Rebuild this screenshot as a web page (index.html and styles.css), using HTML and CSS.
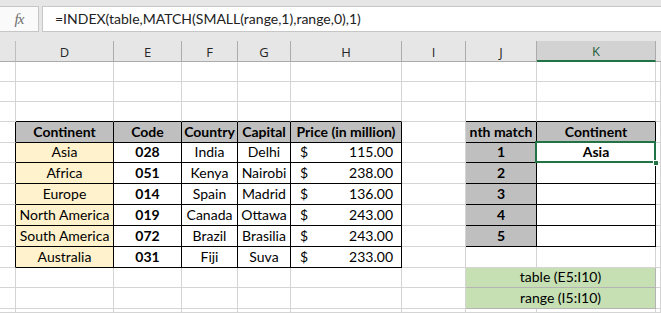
FILE: index.html
```html
<!DOCTYPE html>
<html>
<head>
<meta charset="utf-8">
<link rel="stylesheet" href="styles.css">
</head>
<body>
<div class="topbar">
  <div class="fxbox"><span class="fx">fx</span></div>
  <div class="formula">=INDEX(table,MATCH(SMALL(range,1),range,0),1)</div>
</div>
<div class="sheet">
  <!-- column headers -->
  <div class="ch corner"></div>
  <div class="ch">D</div><div class="ch">E</div><div class="ch">F</div><div class="ch">G</div>
  <div class="ch">H</div><div class="ch">I</div><div class="ch">J</div><div class="ch sel">K</div><div class="ch last"></div>

  <!-- rows 1-3 -->
  <div class="c rh"></div><div class="c"></div><div class="c"></div><div class="c"></div><div class="c"></div><div class="c"></div><div class="c"></div><div class="c"></div><div class="c"></div><div class="c"></div>
  <div class="c rh"></div><div class="c"></div><div class="c"></div><div class="c"></div><div class="c"></div><div class="c"></div><div class="c"></div><div class="c"></div><div class="c"></div><div class="c"></div>
  <div class="c rh"></div><div class="c tb"></div><div class="c tb"></div><div class="c tb"></div><div class="c tb"></div><div class="c tb"></div><div class="c"></div><div class="c tb"></div><div class="c tb"></div><div class="c"></div>

  <!-- header row -->
  <div class="c rh lb"></div>
  <div class="c k hd">Continent</div><div class="c k hd">Code</div><div class="c k hd">Country</div><div class="c k hd">Capital</div><div class="c k hd">Price (in million)</div>
  <div class="c"></div><div class="c k hd">nth match</div><div class="c k hd">Continent</div><div class="c"></div>

  <!-- data rows -->
  <div class="c rh lb"></div>
  <div class="c k yl">Asia</div><div class="c k b">028</div><div class="c k">India</div><div class="c k">Delhi</div><div class="c k price"><span>$</span><span>115.00</span></div>
  <div class="c"></div><div class="c k gr b">1</div><div class="c k b active">Asia<i class="handle"></i></div><div class="c"></div>

  <div class="c rh lb"></div>
  <div class="c k yl">Africa</div><div class="c k b">051</div><div class="c k">Kenya</div><div class="c k">Nairobi</div><div class="c k price"><span>$</span><span>238.00</span></div>
  <div class="c"></div><div class="c k gr b">2</div><div class="c k"></div><div class="c"></div>

  <div class="c rh lb"></div>
  <div class="c k yl">Europe</div><div class="c k b">014</div><div class="c k">Spain</div><div class="c k">Madrid</div><div class="c k price"><span>$</span><span>136.00</span></div>
  <div class="c"></div><div class="c k gr b">3</div><div class="c k"></div><div class="c"></div>

  <div class="c rh lb"></div>
  <div class="c k yl">North America</div><div class="c k b">019</div><div class="c k">Canada</div><div class="c k">Ottawa</div><div class="c k price"><span>$</span><span>243.00</span></div>
  <div class="c"></div><div class="c k gr b">4</div><div class="c k"></div><div class="c"></div>

  <div class="c rh lb"></div>
  <div class="c k yl">South America</div><div class="c k b">072</div><div class="c k">Brazil</div><div class="c k">Brasilia</div><div class="c k price"><span>$</span><span>243.00</span></div>
  <div class="c"></div><div class="c k gr b">5</div><div class="c k"></div><div class="c"></div>

  <div class="c rh lb"></div>
  <div class="c k yl">Australia</div><div class="c k b">031</div><div class="c k">Fiji</div><div class="c k">Suva</div><div class="c k price"><span>$</span><span>233.00</span></div>
  <div class="c"></div><div class="c"></div><div class="c"></div><div class="c"></div>

  <!-- row 11 -->
  <div class="c rh"></div><div class="c"></div><div class="c"></div><div class="c"></div><div class="c"></div><div class="c"></div><div class="c"></div>
  <div class="c green span2">table (E5:I10)</div><div class="c"></div>

  <!-- row 12 -->
  <div class="c rh"></div><div class="c"></div><div class="c"></div><div class="c"></div><div class="c"></div><div class="c"></div><div class="c"></div>
  <div class="c green span2">range (I5:I10)</div><div class="c"></div>

  <!-- row 13 -->
  <div class="c rh"></div><div class="c"></div><div class="c"></div><div class="c"></div><div class="c"></div><div class="c"></div><div class="c"></div><div class="c"></div><div class="c"></div><div class="c"></div>
</div>
</body>
</html>
```
FILE: styles.css
```css
* { box-sizing: border-box; }
html, body { margin: 0; padding: 0; }
body {
  width: 661px;
  height: 313px;
  overflow: hidden;
  background: #fff;
  font-family: Lato, "Open Sans", sans-serif;
}

.topbar {
  height: 41px;
  background: #e6e6e6;
  padding-top: 6px;
  display: flex;
  gap: 3px;
  align-items: flex-start;
}
.fxbox {
  width: 39px;
  height: 26px;
  background: #fafafa;
  border: 1px solid #c6c6c6;
  border-left: none;
  display: flex;
  align-items: center;
  justify-content: center;
}
.fx {
  font-family: "Liberation Serif", serif;
  font-style: italic;
  font-size: 15px;
  color: #6d6d6d;
  letter-spacing: -1px;
}
.formula {
  flex: 1;
  height: 26px;
  background: #fff;
  border: 1px solid #c6c6c6;
  border-right: none;
  padding-left: 12px;
  font-family: Lato, sans-serif;
  font-size: 14px;
  line-height: 24px;
  color: #222;
  white-space: nowrap;
}

.sheet {
  display: grid;
  grid-template-columns: 16px 98px 68px 56px 53px 111px 64px 71px 119px 1fr;
  grid-template-rows: 21px 20px 20px 20px 21px 20px 21px 21px 21px 21px 21px 20px 21px 4px;
}

.ch {
  background: #e6e6e6;
  border-right: 1px solid #ababab;
  border-bottom: 1px solid #ababab;
  display: flex;
  align-items: center;
  justify-content: center;
  font-family: "Open Sans", sans-serif;
  font-size: 13px;
  color: #262626;
  padding-top: 1px;
}
.ch.corner { border-right-color: #bdbdbd; }
.ch.sel {
  background: #d2d2d2;
  color: #1d5c38;
  border-bottom: 2px solid #217346;
}
.ch.last { border-right: none; }

.c {
  border-right: 1px solid #d4d4d4;
  border-bottom: 1px solid #d4d4d4;
  display: flex;
  align-items: flex-end;
  justify-content: center;
  font-size: 14px;
  line-height: 18px;
  color: #000;
  white-space: nowrap;
  padding-bottom: 1px;
}
.c.lb { border-right-color: #000; }
.c.tb { border-bottom-color: #000; }
.c.k {
  border-right-color: #000;
  border-bottom-color: #000;
}
.hd { background: #bfbfbf; font-weight: 700; }
.yl { background: #fff2cc; }
.gr { background: #bfbfbf; }
.b { font-weight: 700; }

.price {
  justify-content: space-between;
  padding-left: 9px;
  padding-right: 8px;
}

.active {
  position: relative;
}
.active::after {
  content: "";
  position: absolute;
  left: -2px;
  top: -2px;
  right: -1px;
  bottom: -1px;
  border: 2px solid #217346;
  pointer-events: none;
}
.handle {
  position: absolute;
  right: -4px;
  bottom: -4px;
  width: 6px;
  height: 6px;
  background: #217346;
  border: 1px solid #fff;
  z-index: 2;
}

.green {
  background: #c6e0b4;
  border-right-color: #b4b4b4;
  border-bottom-color: #b4b4b4;
}
.span2 { grid-column: span 2; }
```
